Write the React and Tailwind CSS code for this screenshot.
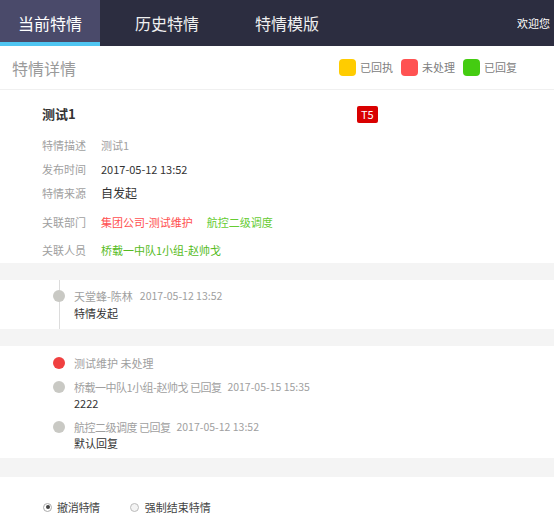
import React from 'react';

const tabs = [
  { name: '当前特情', w: 'w-[100px]', active: true },
  { name: '历史特情', w: 'w-[134px]' },
  { name: '特情模版', w: 'w-[106px]' },
];

const legend = [
  { label: '已回执', color: 'bg-[#ffcc00]' },
  { label: '未处理', color: 'bg-[#ff5252]' },
  { label: '已回复', color: 'bg-[#44cc11]' },
];

function Row({ label, className = '', children }) {
  return (
    <div className={'flex items-center h-[24px] ' + className}>
      <div className="w-[59px] text-[11px] text-[#a0a0a0]">{label}</div>
      <div className="flex items-center gap-[14px]">{children}</div>
    </div>
  );
}

function Dot({ color = 'bg-[#c9c9c4]' }) {
  return <div className={'w-[12px] h-[12px] rounded-full shrink-0 ' + color} />;
}

function Gap({ h = 'h-[17px]' }) {
  return <div className={'bg-[#f4f4f4] ' + h} />;
}

export default function App() {
  return (
    <div className="w-[554px] min-h-[527px] bg-white font-['Noto_Sans_CJK_SC',sans-serif]">
      {/* 顶部导航 */}
      <div className="h-[46px] bg-[#2c2d40] flex items-stretch text-white">
        {tabs.map(t => (
          <div
            key={t.name}
            className={
              t.w +
              ' flex items-center justify-center text-[16px] ' +
              (t.active ? 'bg-[#4a4a6a] border-b-4 border-[#4fc6f2] pt-[4px]' : 'text-[#f0f0f0]')
            }
          >
            {t.name}
          </div>
        ))}
        <div className="ml-auto mr-[4px] flex items-center text-[11px]">欢迎您</div>
      </div>

      {/* 标题 + 图例 */}
      <div className="h-[44px] flex items-center justify-between pl-[12px] pr-[37px] border-b border-[#f0f0f0]">
        <div className="text-[16px] text-[#9a9a9a]">特情详情</div>
        <div className="flex items-center gap-[8px]">
          {legend.map(l => (
            <div key={l.label} className="flex items-center gap-[4px]">
              <div className={'w-[17px] h-[17px] rounded-[4px] ' + l.color} />
              <span className="text-[11px] text-[#808080]">{l.label}</span>
            </div>
          ))}
        </div>
      </div>

      {/* 详情 */}
      <div className="px-[42px] pt-[14px] pb-[1px]">
        <div className="flex items-center h-[20px]">
          <div className="w-[315px] text-[13px] font-bold text-[#333]">测试1</div>
          <div className="h-[17px] px-[4px] rounded-[2px] bg-[#d90000] text-white text-[11px] flex items-center">T5</div>
        </div>
        <Row label="特情描述" className="mt-[9px]">
          <span className="text-[11px] text-[#a0a0a0]">测试1</span>
        </Row>
        <Row label="发布时间">
          <span className="text-[11px] text-[#333]">2017-05-12 13:52</span>
        </Row>
        <Row label="特情来源">
          <span className="text-[12px] text-[#333]">自发起</span>
        </Row>
        <Row label="关联部门" className="mt-[5px]">
          <span className="text-[11px] text-[#ff4f4f]">集团公司-测试维护</span>
          <span className="text-[11px] text-[#66cc33]">航控二级调度</span>
        </Row>
        <Row label="关联人员" className="mt-[4px]">
          <span className="text-[11px] text-[#55bb22]">桥载一中队1小组-赵帅戈</span>
        </Row>
      </div>

      <Gap />

      {/* 时间线 1 */}
      <div className="relative pt-[8px] pb-[7px]">
        <div className="absolute left-[59px] top-0 bottom-0 w-px bg-[#dcdcdc]" />
        <div className="flex pl-[53px] gap-[9px]">
          <div className="relative pt-[2px]"><Dot /></div>
          <div>
            <div className="h-[16px] flex items-center gap-[7px] text-[11px] text-[#a0a0a0]">
              <span>天堂蜂-陈林</span>
              <span className="text-[10.5px]">2017-05-12 13:52</span>
            </div>
            <div className="h-[18px] flex items-center text-[11px] text-[#333]">特情发起</div>
          </div>
        </div>
      </div>

      <Gap />

      {/* 时间线 2 */}
      <div className="pt-[9px] pb-[7px] pl-[53px] flex flex-col gap-[8px]">
        <div className="flex gap-[9px]">
          <div className="pt-[2px]"><Dot color="bg-[#f04040]" /></div>
          <div className="h-[16px] flex items-center text-[11px] text-[#a0a0a0]">测试维护 未处理</div>
        </div>
        <div className="flex gap-[9px]">
          <div className="pt-[2px]"><Dot /></div>
          <div>
            <div className="h-[16px] flex items-center gap-[6px] text-[11px] text-[#a0a0a0]">
              <span className="tracking-[-0.5px]">桥载一中队1小组-赵帅戈 已回复</span>
              <span className="text-[10.5px]">2017-05-15 15:35</span>
            </div>
            <div className="h-[16px] flex items-center text-[11px] text-[#333]">2222</div>
          </div>
        </div>
        <div className="flex gap-[9px]">
          <div className="pt-[2px]"><Dot /></div>
          <div>
            <div className="h-[16px] flex items-center gap-[6px] text-[11px] text-[#a0a0a0]">
              <span className="tracking-[-0.5px]">航控二级调度 已回复</span>
              <span className="text-[10.5px]">2017-05-12 13:52</span>
            </div>
            <div className="h-[16px] flex items-center text-[11px] text-[#333]">默认回复</div>
          </div>
        </div>
      </div>

      <Gap h="h-[19px]" />

      {/* 操作 */}
      <div className="pt-[12px] pb-[12px] pl-[43px] flex items-center h-[60px]">
        <label className="flex items-center gap-[5px] mr-[30px]">
          <span className="w-[9px] h-[9px] rounded-full border border-[#aaa] flex items-center justify-center">
            <span className="w-[4px] h-[4px] rounded-full bg-[#444]" />
          </span>
          <span className="text-[11px] text-[#444] tracking-[-0.3px]">撤消特情</span>
        </label>
        <label className="flex items-center gap-[6px]">
          <span className="w-[9px] h-[9px] rounded-full border border-[#bbb] bg-[#f4f4f4]" />
          <span className="text-[11px] text-[#444]">强制结束特情</span>
        </label>
      </div>
    </div>
  );
}
